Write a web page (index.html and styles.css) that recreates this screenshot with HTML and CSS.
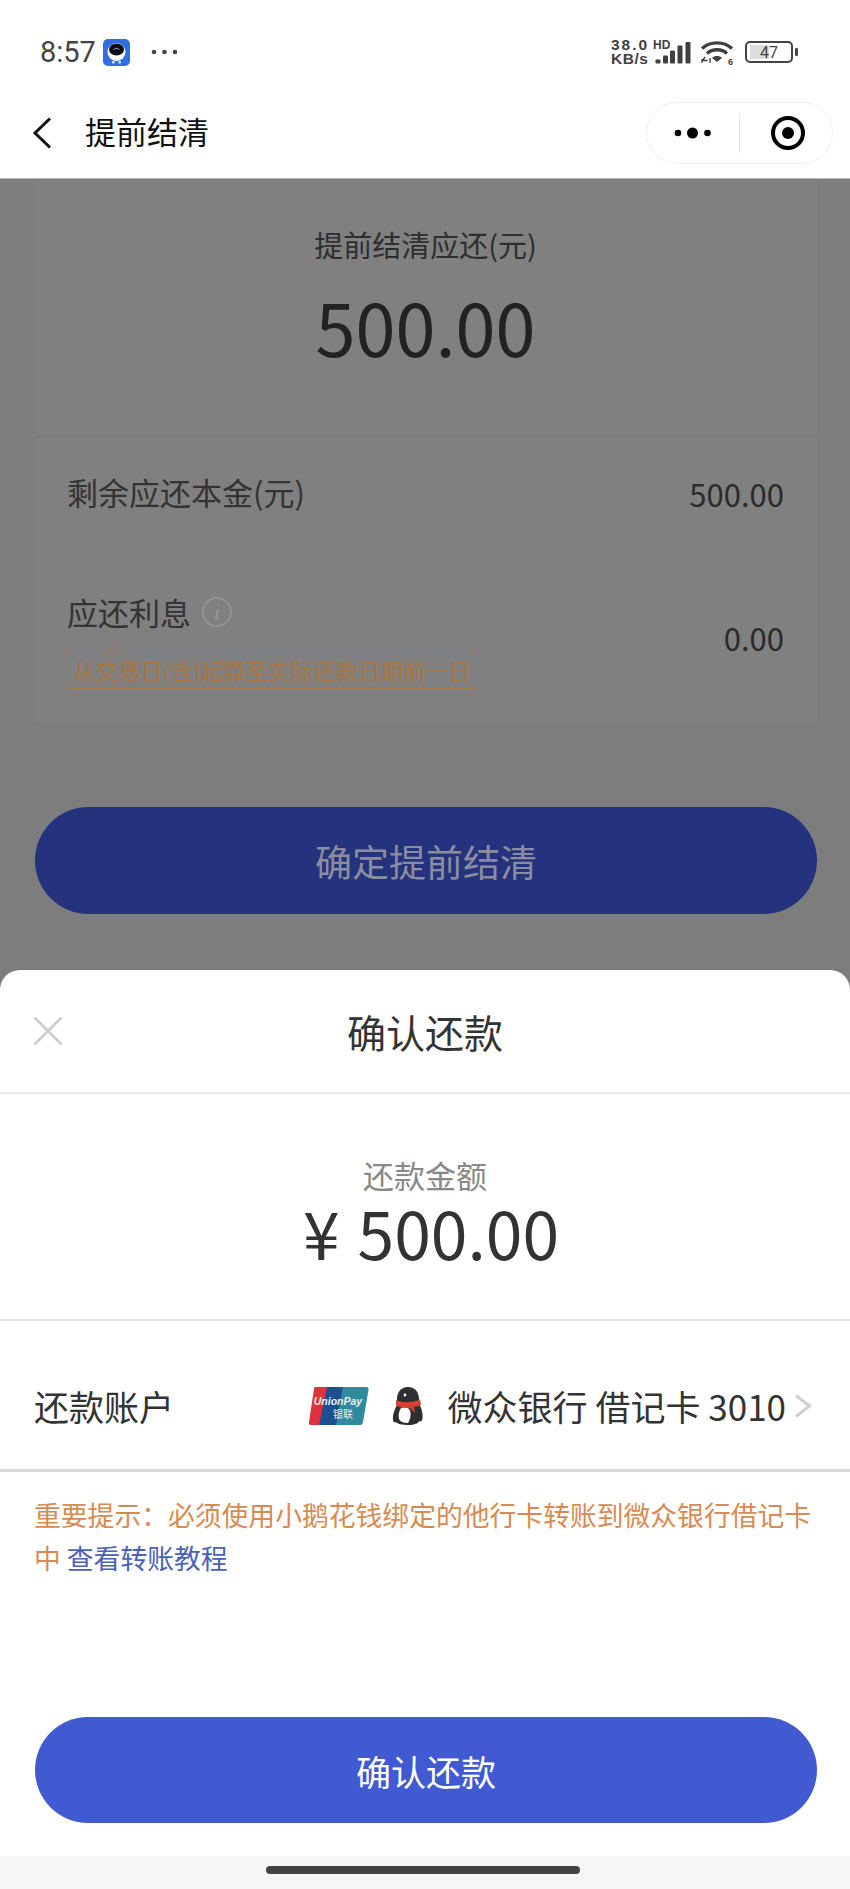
FILE: index.html
```html
<!DOCTYPE html>
<html lang="zh-CN">
<head>
<meta charset="utf-8">
<title>提前结清</title>
<link rel="stylesheet" href="styles.css">
</head>
<body>
<div class="phone">
  <header class="top">
    <div class="status">
      <div class="status-left">
        <span class="clock">8:57</span>
        <svg class="app-icon" viewBox="0 0 27 27">
          <rect width="27" height="27" rx="5" fill="#2f6fe3"/>
          <ellipse cx="13.5" cy="13" rx="9" ry="9" fill="#fff"/>
          <ellipse cx="13.5" cy="10.5" rx="7.5" ry="6" fill="#0b0b0f"/>
          <path d="M10.5 11c1.5-2.2 4.5-2.2 6 0" fill="none" stroke="#8fb6f5" stroke-width="1"/>
          <rect x="9" y="22" width="2.6" height="2.4" fill="#cfe0fb"/>
          <rect x="15.4" y="22" width="2.6" height="2.4" fill="#cfe0fb"/>
        </svg>
        <svg class="more-dots" viewBox="0 0 28 6"><circle cx="3" cy="3" r="2.3"/><circle cx="13.5" cy="3" r="2.3"/><circle cx="24" cy="3" r="2.3"/></svg>
      </div>
      <div class="status-right">
        <div class="speed"><span class="speed-value">38.0</span><span class="speed-unit">KB/s</span></div>
        <div class="signal">
          <span class="hd">HD</span>
          <svg class="bars" viewBox="0 0 36 24">
            <rect x="0.500" y="19.500" width="5" height="4" rx="1"/>
            <rect x="8" y="15.500" width="5" height="8" rx="1"/>
            <rect x="15" y="10.500" width="5" height="13" rx="1"/>
            <rect x="22.500" y="5.500" width="5" height="18" rx="1"/>
            <rect x="30.500" y="2" width="5" height="21.500" rx="1"/>
          </svg>
        </div>
        <svg class="wifi" viewBox="0 0 34 26">
          <path d="M2 9.500C10 2 24 2 32 9.500" fill="none" stroke="#404040" stroke-width="3.400"/>
          <path d="M7 14.500c5.500-5 14.500-5 20 0" fill="none" stroke="#404040" stroke-width="3.400"/>
          <path d="M12 19c3-2.600 7-2.600 10 0l-5 4z" fill="#404040"/>
          <path d="M2 20v4M5 18l-2.500 3.500h5M10 19v5" fill="none" stroke="#404040" stroke-width="1.300"/>
          <text x="28" y="25.500" class="wifi-six">6</text>
        </svg>
        <div class="battery"><span class="battery-fill"></span><span class="battery-level">47</span></div>
        <span class="battery-nib"></span>
      </div>
    </div>
    <nav class="nav">
      <svg class="back" viewBox="0 0 20 32"><path d="M18 1.500 3 16l15 14.500" fill="none" stroke="#111" stroke-width="3"/></svg>
      <h1 class="nav-title">提前结清</h1>
      <div class="capsule">
        <svg class="capsule-more" viewBox="0 0 38 14"><circle cx="4" cy="7" r="3.300"/><circle cx="18.500" cy="7" r="5.500"/><circle cx="33.500" cy="7" r="3.300"/></svg>
        <span class="capsule-rule"></span>
        <svg class="capsule-target" viewBox="0 0 36 36"><circle cx="18" cy="18" r="15" fill="none" stroke="#000" stroke-width="4"/><circle cx="18" cy="18" r="6"/></svg>
      </div>
    </nav>
  </header>

  <main class="behind">
    <section class="card summary">
      <p class="summary-label">提前结清应还(元)</p>
      <p class="summary-value">500.00</p>
    </section>
    <section class="card details">
      <div class="row row-principal">
        <span class="row-label">剩余应还本金(元)</span>
        <span class="row-value">500.00</span>
      </div>
      <div class="row row-interest">
        <div class="interest-left">
          <div class="interest-head">
            <span class="row-label">应还利息</span>
            <svg class="info" viewBox="0 0 30 30"><circle cx="15" cy="15" r="14" fill="none" stroke="#959595" stroke-width="1.500"/><path d="M16 12.500l-2 8.500c0 1 .8 1 2.200 0M16.500 8v.5" fill="none" stroke="#959595" stroke-width="2"/></svg>
          </div>
          <p class="hint">从交易日(含)起算至实际还款日期前一日</p>
        </div>
        <span class="row-value row-value-interest">0.00</span>
      </div>
    </section>
    <div class="dim-button">确定提前结清</div>
  </main>

  <section class="sheet">
    <div class="sheet-head">
      <svg class="close" viewBox="0 0 30 30"><path d="M1.500 1.500l27 27M28.500 1.500l-27 27" fill="none" stroke="#cdcdcd" stroke-width="2.600"/></svg>
      <h2 class="sheet-title">确认还款</h2>
    </div>
    <div class="amount">
      <p class="amount-label">还款金额</p>
      <p class="amount-value"><span class="yen">¥</span>500.00</p>
    </div>
    <div class="account">
      <span class="account-label">还款账户</span>
      <div class="account-card">
        <svg class="unionpay" viewBox="0 0 60 38">
          <path d="M6 0h14L12 38H2q-2.500 0-2-3L5 2q.3-2 1-2z" fill="#e0303c"/>
          <path d="M18 0h18l-7 38H10z" fill="#1d4f91"/>
          <path d="M34 0h23q3 0 2.500 3L54 35q-.5 3-3 3H27z" fill="#2e8a9c"/>
          <text x="29" y="18" class="up-latin">UnionPay</text>
          <text x="34" y="31" class="up-cjk">银联</text>
        </svg>
        <svg class="penguin" viewBox="0 0 30 38">
          <path d="M15 0c7 0 11 5.500 11 12 0 2 0 3 .5 5 2 5 3.500 9 3 14-.4 3-1.500 4-3 3-1 2-5 4-11 4S4 37 3 35c-1.500 1-2.500 0-3-2-.6-5 1.500-10 3.500-14 .7-2 .5-4 .5-7C4 5.500 8 0 15 0z" fill="#2f2f33"/>
          <path d="M8 21c3-1.500 6-1 8 1 2.500 3 2 9-1 14-5 0-8-1.500-9-4-1-4 0-8 2-11z" fill="#fff"/>
          <path d="M3 13c6 3 16 3 24-.5l1 5c-2 1.500-5 2-7 2.500l1 6-5-5c-6 0-11-.5-14-3z" fill="#d8402f"/>
          <circle cx="12" cy="8" r="1.400" fill="#fff"/>
        </svg>
        <span class="account-name">微众银行 借记卡 3010</span>
        <svg class="chevron" viewBox="0 0 18 24"><path d="M2 1.500 15.500 12 2 22.500" fill="none" stroke="#cfcfcf" stroke-width="3"/></svg>
      </div>
    </div>
    <div class="notice">
      <p class="notice-line">重要提示：必须使用小鹅花钱绑定的他行卡转账到微众银行借记卡</p>
      <p class="notice-line">中 <a class="notice-link">查看转账教程</a></p>
    </div>
    <div class="confirm">确认还款</div>
    <div class="home-area"><span class="home-bar"></span></div>
  </section>
</div>
</body>
</html>
```

FILE: styles.css
```css
* { box-sizing: border-box; margin: 0; padding: 0; }

html, body { height: 100%; }

body {
  background: #7d7d7d;
  font-family: "Noto Sans CJK SC", "Noto Sans", sans-serif;
  color: #333;
}

.phone {
  width: 850px;
  height: 1889px;
  display: flex;
  flex-direction: column;
  overflow: hidden;
}

/* Status bar and navigation */
.top {
  background: #fff;
  height: 179px;
  border-bottom: 1px solid #b5b5b5;
  flex: none;
}

.status {
  height: 88px;
  padding: 16px 52px 0 40px;
  display: flex;
  justify-content: space-between;
  align-items: center;
}

.status-left { display: flex; align-items: center; }

.clock {
  font-family: Roboto, sans-serif;
  font-size: 29px;
  color: #444;
  width: 63px;
}

.app-icon { width: 27px; height: 27px; }

.more-dots { width: 28px; height: 6px; margin-left: 21px; fill: #444; }

.status-right { display: flex; align-items: center; }

.speed {
  display: flex;
  flex-direction: column;
  font-family: "Liberation Sans", sans-serif;
  font-weight: 700;
  font-size: 15.500px;
  line-height: 14px;
  color: #404040;
  width: 40px;
}

.speed-value { letter-spacing: 2px; }

.speed-unit { letter-spacing: .5px; }

.signal { position: relative; width: 36px; height: 24px; margin-left: 4px; }

.hd {
  position: absolute;
  left: -2px;
  top: -1px;
  font-family: "Liberation Sans", sans-serif;
  font-weight: 700;
  font-size: 12px;
  line-height: 12px;
  color: #404040;
}

.bars { display: block; width: 36px; height: 24px; fill: #404040; }

.wifi { width: 34px; height: 26px; margin-left: 9px; }

.wifi-six {
  font-family: "Liberation Sans", sans-serif;
  font-weight: 700;
  font-size: 9px;
  fill: #404040;
}

.battery {
  position: relative;
  width: 48px;
  height: 22px;
  margin-left: 11px;
  border: 2px solid #444;
  border-radius: 5px;
  display: flex;
  align-items: center;
  justify-content: center;
}

.battery-fill {
  position: absolute;
  left: 3px;
  top: 2px;
  bottom: 2px;
  width: 19px;
  background: #ddd;
}

.battery-level {
  position: relative;
  font-family: Roboto, sans-serif;
  font-size: 16px;
  color: #444;
}

.battery-nib {
  width: 3px;
  height: 8px;
  margin-left: 2px;
  background: #444;
  border-radius: 1px;
}

.nav {
  height: 90px;
  padding: 0 17px 0 32px;
  display: flex;
  align-items: center;
}

.back { width: 20px; height: 32px; flex: none; }

.nav-title {
  font-size: 31px;
  line-height: 40px;
  font-weight: 400;
  color: #111;
  margin: -4px 0 0 33px;
  flex: 1;
}

.capsule {
  width: 187px;
  height: 62px;
  margin-top: -1px;
  border: 1px solid #f0f0f0;
  border-radius: 31px;
  display: flex;
  align-items: center;
}

.capsule-more { width: 38px; height: 14px; margin-left: 27px; fill: #000; }

.capsule-rule { width: 1px; height: 40px; margin-left: 27px; background: #e8e8e8; }

.capsule-target { width: 36px; height: 36px; margin-left: 30px; }

/* Dimmed page behind the sheet */
.behind {
  height: 791px;
  flex: none;
  padding: 0 33px 0 34px;
}

.card { background: #808080; }

.summary {
  height: 256px;
  text-align: center;
  padding-top: 44px;
}

.summary-label { font-size: 29px; line-height: 42px; color: #2e2e2e; }

.summary-value { font-size: 72px; line-height: 100px; margin-top: 11px; color: #222; }

.details {
  height: 284px;
  margin-top: 3px;
  padding: 0 33px;
}

.row { display: flex; justify-content: space-between; align-items: center; }

.row-principal { height: 112px; }

.row-principal .row-label { margin-top: -4px; }

.row-label { font-size: 31px; line-height: 44px; color: #333; }

.row-value { font-size: 31px; line-height: 44px; color: #2b2b2b; }

.row-value-interest { margin-top: -3px; }

.row-interest { padding-top: 40px; }

.interest-left { display: flex; flex-direction: column; align-items: flex-start; }

.interest-head { display: flex; align-items: center; gap: 11px; }

.info { width: 30px; height: 30px; }

.hint {
  position: relative;
  margin-top: 19px;
  height: 36px;
  padding: 0 4px 0 5px;
  border: 1px solid #a87a4e;
  font-size: 22.500px;
  line-height: 33px;
  color: #a9743f;
  white-space: nowrap;
}

.hint::before {
  content: "";
  position: absolute;
  left: 39px;
  top: -6px;
  width: 11px;
  height: 11px;
  background: #808080;
  border-left: 1px solid #a87a4e;
  border-top: 1px solid #a87a4e;
  transform: rotate(45deg);
}

.dim-button {
  height: 107px;
  margin: 85px 0 0 1px;
  border-radius: 54px;
  background: #25327e;
  color: #8a8d9f;
  font-size: 37px;
  display: flex;
  align-items: center;
  justify-content: center;
}

/* Confirmation sheet */
.sheet {
  flex: 1;
  background: #fff;
  border-radius: 20px 20px 0 0;
  display: flex;
  flex-direction: column;
}

.sheet-head {
  height: 124px;
  flex: none;
  border-bottom: 2px solid #ececec;
  position: relative;
  display: flex;
  align-items: center;
  justify-content: center;
}

.close { position: absolute; left: 33px; top: 46px; width: 30px; height: 30px; }

.sheet-title { font-size: 39px; font-weight: 400; color: #333; }

.amount {
  height: 227px;
  flex: none;
  border-bottom: 2px solid #e4e4e4;
  text-align: center;
  padding-top: 61px;
}

.amount-label { font-size: 31px; line-height: 40px; color: #888; }

.amount-value {
  font-size: 66px;
  line-height: 72px;
  padding-left: 12px;
  color: #333;
}

.yen { margin-right: 18px; }

.account {
  height: 151px;
  flex: none;
  border-bottom: 3px solid #d8d8d8;
  padding: 21px 38px 0 34px;
  display: flex;
  justify-content: space-between;
  align-items: center;
}

.account-label { font-size: 35px; color: #333; }

.account-card { display: flex; align-items: center; }

.unionpay { width: 60px; height: 38px; }

.up-latin {
  font-family: "Liberation Sans", sans-serif;
  font-weight: 700;
  font-style: italic;
  font-size: 10.500px;
  fill: #e9eef2;
  text-anchor: middle;
}

.up-cjk { font-size: 10px; fill: #e9eef2; text-anchor: middle; }

.penguin { width: 30px; height: 38px; margin-left: 24px; }

.account-name { font-size: 35px; color: #333; margin-left: 25px; white-space: nowrap; }

.chevron { width: 18px; height: 24px; margin-left: 8px; }

.notice {
  padding: 21px 0 0 34px;
  height: 245px;
  flex: none;
  font-size: 26.800px;
  line-height: 43px;
  color: #d98a52;
}

.notice-line { white-space: nowrap; }

.notice-link { color: #4a61b8; }

.confirm {
  height: 106px;
  flex: none;
  margin: 0 33px 0 35px;
  border-radius: 53px;
  background: #4159d1;
  color: #fff;
  font-size: 35px;
  display: flex;
  align-items: center;
  justify-content: center;
}

.home-area {
  margin-top: 33px;
  flex: 1;
  background: #f6f6f6;
  display: flex;
  justify-content: center;
  padding: 10px 5px 0 0;
}

.home-bar { width: 314px; height: 8px; border-radius: 4px; background: #444; }
```
